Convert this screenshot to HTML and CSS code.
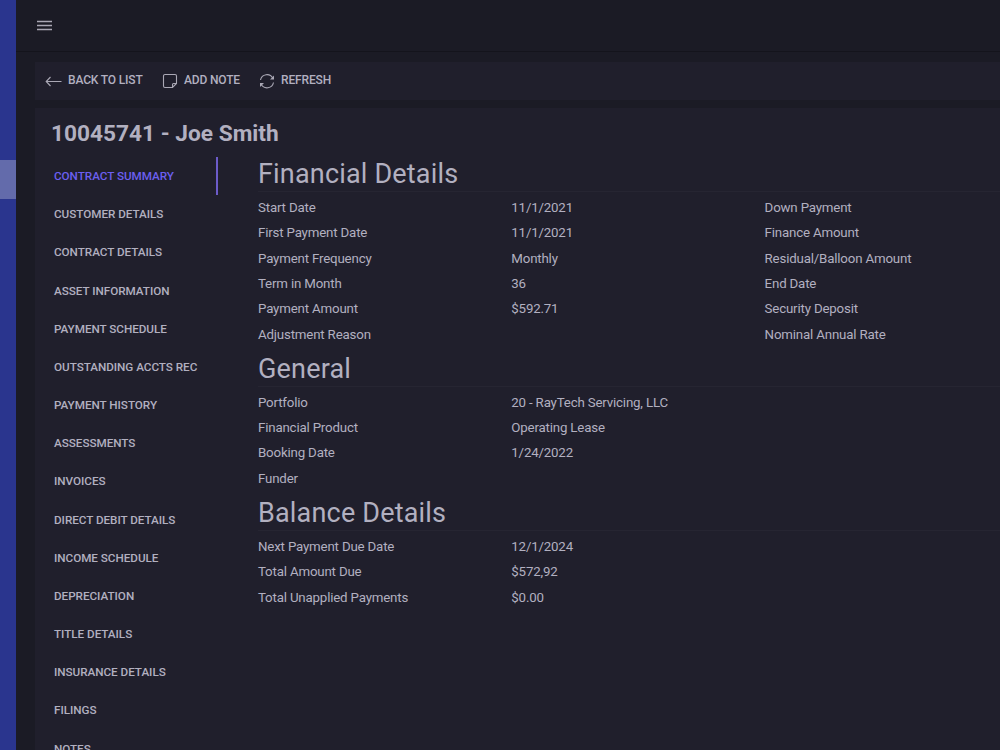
FILE: index.html
```html
<!DOCTYPE html>
<html lang="en">
	<head>
		<meta charset="utf-8">
		<title>10045741 - Joe Smith</title>
		<link rel="stylesheet" href="styles.css">
	</head>
	<body>
		<aside class="rail"><div class="rail-active"></div></aside>
		<div class="page">
			<header class="topbar">
				<svg class="menu-icon" width="16" height="12" viewBox="0 0 16 12"><path d="M0 1.500h15M0 5.500h15M0 9.500h15"/></svg>
			</header>
			<div class="toolbar">
				<a class="tool back">
					<svg width="17" height="16" viewBox="0 0 17 16"><path d="M16.500 8.500H1.500M5.500 4L1.200 8.500L5.500 13"/></svg>
					Back to list
				</a>
				<a class="tool note">
					<svg width="16" height="16" viewBox="0 0 16 16"><path d="M3 1.500h10a1.500 1.500 0 0 1 1.500 1.500V10.500L10.500 14.500H3A1.500 1.500 0 0 1 1.500 13V3A1.500 1.500 0 0 1 3 1.500zM14.500 10.500H11.500A1 1 0 0 0 10.500 11.500V14.500"/></svg>
					Add note
				</a>
				<a class="tool refresh">
					<svg width="16" height="16" viewBox="0 0 16 16"><path d="M1.500 7A6.600 6.600 0 0 1 13.800 5.200M14.500 9.500A6.600 6.600 0 0 1 2.200 11.300"/><path class="tip" d="M15 2.500V6.500H11zM1 14V10H5z"/></svg>
					Refresh
				</a>
			</div>
			<main class="panel">
				<h1>10045741 - Joe Smith</h1>
				<div class="content">
					<nav class="tabs">
						<a class="tab active">Contract summary</a>
						<a class="tab">Customer details</a>
						<a class="tab">Contract details</a>
						<a class="tab">Asset information</a>
						<a class="tab">Payment schedule</a>
						<a class="tab">Outstanding accts rec</a>
						<a class="tab">Payment history</a>
						<a class="tab">Assessments</a>
						<a class="tab">Invoices</a>
						<a class="tab">Direct debit details</a>
						<a class="tab">Income schedule</a>
						<a class="tab">Depreciation</a>
						<a class="tab">Title details</a>
						<a class="tab">Insurance details</a>
						<a class="tab">Filings</a>
						<a class="tab">Notes</a>
					</nav>
					<div class="details">
						<h2>Financial Details</h2>
						<div class="grid">
							<span>Start Date</span><span>11/1/2021</span><span>Down Payment</span>
							<span>First Payment Date</span><span>11/1/2021</span><span>Finance Amount</span>
							<span>Payment Frequency</span><span>Monthly</span><span>Residual/Balloon Amount</span>
							<span>Term in Month</span><span>36</span><span>End Date</span>
							<span>Payment Amount</span><span>$592.71</span><span>Security Deposit</span>
							<span>Adjustment Reason</span><span></span><span>Nominal Annual Rate</span>
						</div>
						<h2>General</h2>
						<div class="grid">
							<span>Portfolio</span><span>20 - RayTech Servicing, LLC</span><span></span>
							<span>Financial Product</span><span>Operating Lease</span><span></span>
							<span>Booking Date</span><span>1/24/2022</span><span></span>
							<span>Funder</span><span></span><span></span>
						</div>
						<h2>Balance Details</h2>
						<div class="grid">
							<span>Next Payment Due Date</span><span>12/1/2024</span><span></span>
							<span>Total Amount Due</span><span>$572,92</span><span></span>
							<span>Total Unapplied Payments</span><span>$0.00</span><span></span>
						</div>
					</div>
				</div>
			</main>
		</div>
	</body>
</html>
```
FILE: styles.css
```css
* {box-sizing: border-box;}
body {
	margin: 0;
	height: 750px;
	display: flex;
	overflow: hidden;
	background: #1b1b25;
	color: #b2b0c0;
	font: 13.3px Roboto, sans-serif;
}
svg {
	fill: none;
	stroke: #aaa8b5;
	stroke-width: 1.1;
	flex: none;
}
.tip {
	fill: #aaa8b5;
	stroke: none;
}
.rail {
	flex: none;
	width: 16px;
	background: #2a358e;
	padding-top: 160px;
}
.rail-active {
	height: 39px;
	background: #636bab;
}
.page {
	flex: 1;
	min-width: 0;
}
.topbar {
	height: 52px;
	border-bottom: 1px solid #14141c;
	padding: 20px 0 0 21px;
}
.menu-icon {
	display: block;
	stroke-width: 1.3;
}
.toolbar {
	display: flex;
	align-items: center;
	height: 38px;
	margin: 10px 0 8px 19px;
	padding-left: 10px;
	background: #201f2c;
}
.tool {
	display: flex;
	align-items: center;
	gap: 6px;
	font-size: 12px;
	line-height: 16px;
	font-weight: 500;
	letter-spacing: -.15px;
	text-transform: uppercase;
	padding-bottom: 2px;
}
.tool svg {
	position: relative;
	top: 1px;
}
.back {width: 117px;}
.note {width: 97px;}
.panel {
	height: 642px;
	margin-left: 19px;
	padding: 9px 0 0 16px;
	background: #201f2c;
}
h1 {
	margin: 0;
	height: 40px;
	font-size: 22.7px;
	line-height: 33px;
	font-weight: 700;
}
.content {display: flex;}
.tabs {
	flex: none;
	width: 167px;
}
.tab {
	display: block;
	height: 38.18px;
	padding-left: 3px;
	font-size: 11.7px;
	line-height: 39px;
	font-weight: 500;
	letter-spacing: -.03px;
	text-transform: uppercase;
	white-space: nowrap;
}
.active {
	color: #6c5ff0;
	border-right: 2px solid #6c5bc9;
}
.details {
	flex: 1;
	margin-left: 40px;
	min-width: 0;
}
h2 {
	margin: 0;
	height: 35px;
	border-bottom: 1px solid #262532;
	font-size: 27px;
	line-height: 35px;
	font-weight: 400;
	letter-spacing: .18px;
}
.grid {
	display: grid;
	grid-template-columns: 253.3px 253.3px 1fr;
	grid-auto-rows: 25.45px;
	line-height: 25px;
	letter-spacing: -.18px;
	padding-top: 2.7px;
	margin-bottom: 4.6px;
	white-space: nowrap;
}
```
